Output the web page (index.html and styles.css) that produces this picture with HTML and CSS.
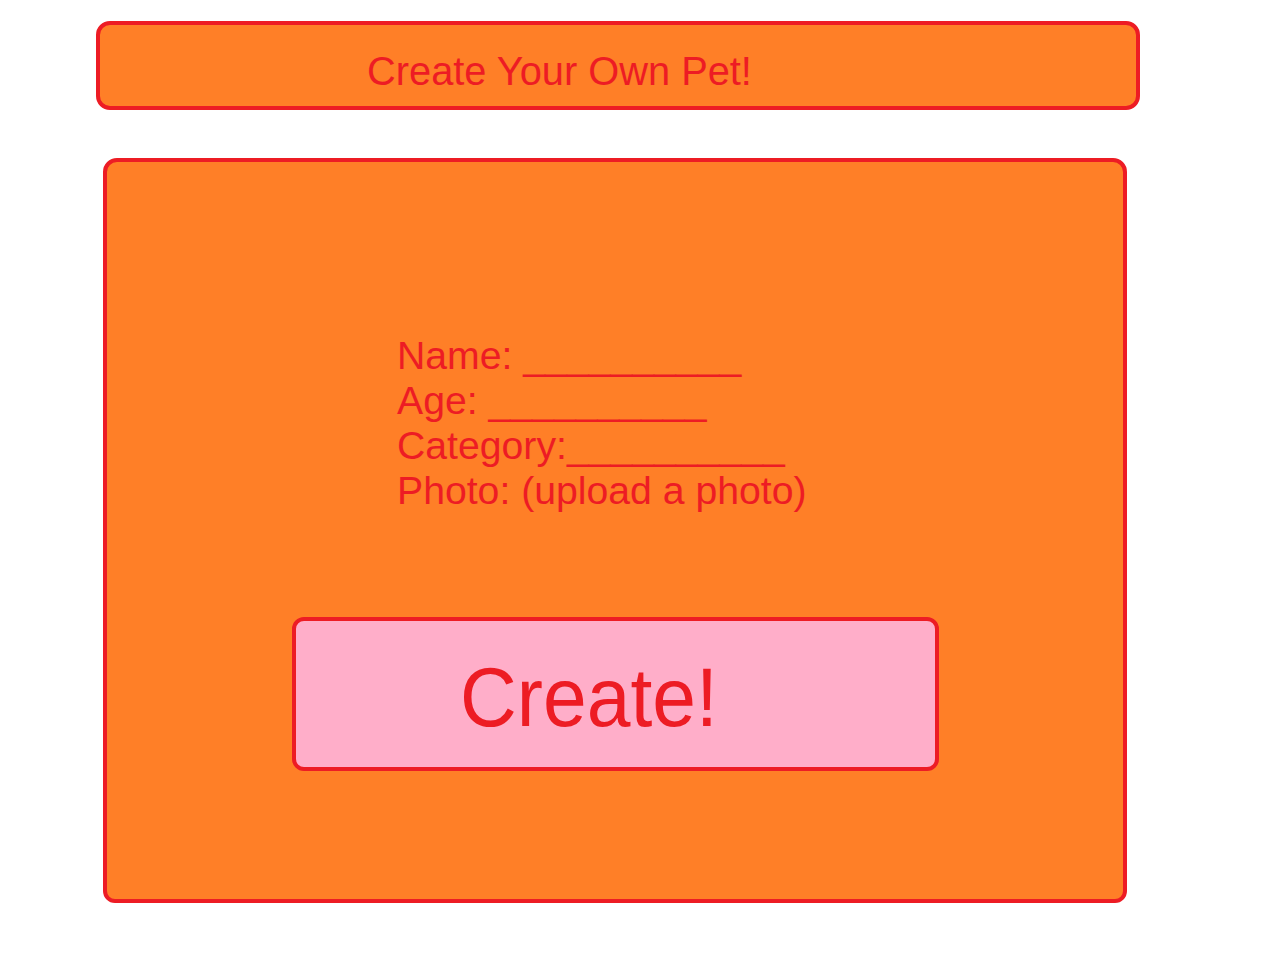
FILE: index.html
```html
<!DOCTYPE html>
<html lang="en">
<head>
<meta charset="utf-8">
<title>Create Your Own Pet!</title>
<link rel="stylesheet" href="styles.css">
</head>
<body>
  <header class="title-bar">
    <h1 class="title">Create Your Own Pet!</h1>
  </header>
  <main class="panel">
    <div class="fields">
      <div class="field">Name: __________</div>
      <div class="field">Age: __________</div>
      <div class="field">Category:__________</div>
      <div class="field">Photo: (upload a photo)</div>
    </div>
    <button class="create-btn" type="button"><span class="create-label">Create!</span></button>
  </main>
</body>
</html>
```

FILE: styles.css
```css
html, body {
  margin: 0;
  padding: 0;
  background: #ffffff;
}

body {
  font-family: "Liberation Sans", Arial, sans-serif;
  color: #ed1c24;
  width: 1280px;
  height: 960px;
  overflow: hidden;
}

.title-bar {
  box-sizing: border-box;
  margin: 21px 0 0 96px;
  width: 1044px;
  height: 89px;
  background: #ff7f27;
  border: 4px solid #ed1c24;
  border-radius: 14px;
  padding: 24px 0 0 267px;
}

.title {
  margin: 0;
  font-weight: normal;
  font-size: 39.8px;
  line-height: 45px;
  white-space: nowrap;
}

.panel {
  display: flex;
  flex-direction: column;
  align-items: flex-start;
  box-sizing: border-box;
  margin: 48px 0 0 103px;
  width: 1024px;
  height: 745px;
  background: #ff7f27;
  border: 4px solid #ed1c24;
  border-radius: 14px 14px 12px 12px;
  padding: 171px 0 0 290px;
}

.fields {
  font-size: 39.2px;
  line-height: 45px;
  white-space: nowrap;
}

.create-btn {
  box-sizing: border-box;
  margin: 104px 0 0 -105px;
  width: 647px;
  height: 154px;
  background: #ffaec9;
  border: 4px solid #ed1c24;
  border-radius: 12px;
  padding: 28px 0 0 164px;
  text-align: left;
  font-family: "Liberation Sans", Arial, sans-serif;
  color: #ed1c24;
  display: flex;
  align-items: flex-start;
  cursor: pointer;
}

.create-label {
  display: inline-block;
  font-size: 84px;
  line-height: 96px;
  transform: scaleX(0.936);
  transform-origin: left top;
  white-space: nowrap;
}
```
